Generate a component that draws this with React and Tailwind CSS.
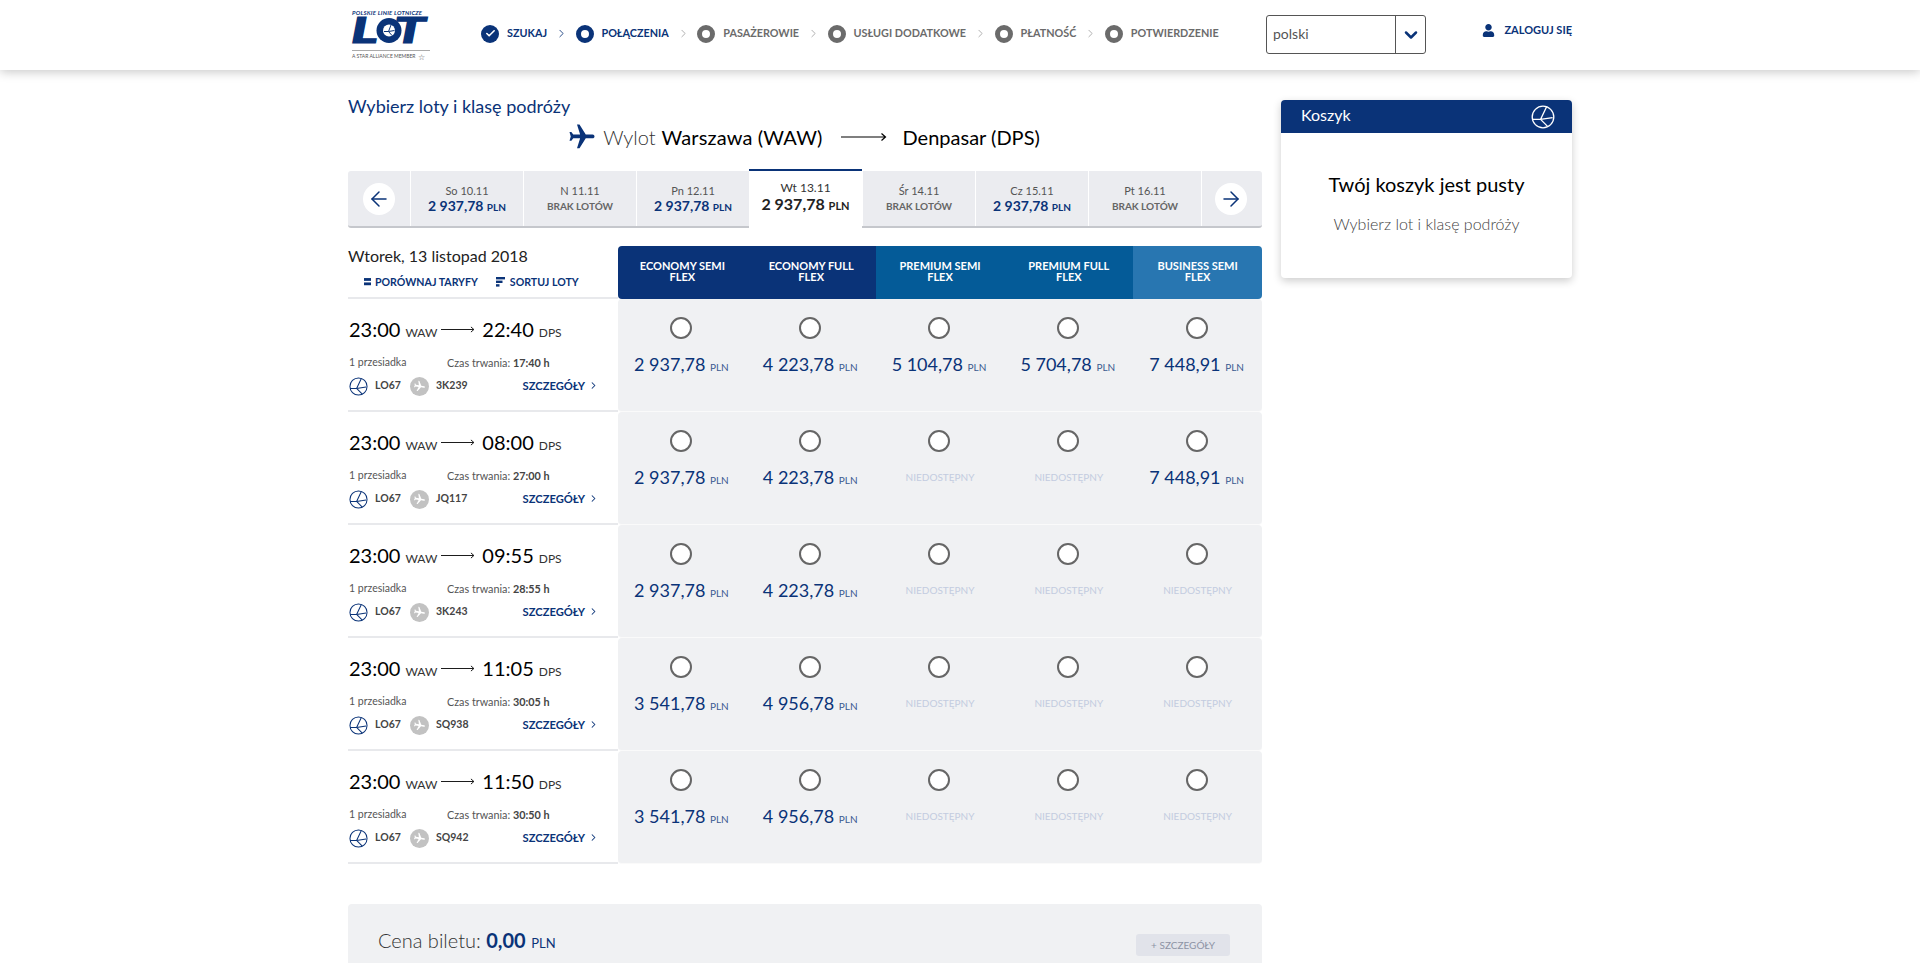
import { ArrowLeft, ArrowRight, Check, ChevronDown, ChevronRight } from "lucide-react";
import { FaUser } from "react-icons/fa";
import { MdFlight } from "react-icons/md";

const steps = [
  { label: "SZUKAJ", state: "done" },
  { label: "POŁĄCZENIA", state: "active" },
  { label: "PASAŻEROWIE", state: "todo" },
  { label: "USŁUGI DODATKOWE", state: "todo" },
  { label: "PŁATNOŚĆ", state: "todo" },
  { label: "POTWIERDZENIE", state: "todo" },
];

const days = [
  { day: "So 10.11", price: "2 937,78" },
  { day: "N 11.11" },
  { day: "Pn 12.11", price: "2 937,78" },
  { day: "Wt 13.11", price: "2 937,78", active: true },
  { day: "Śr 14.11" },
  { day: "Cz 15.11", price: "2 937,78" },
  { day: "Pt 16.11" },
];

const fares = [
  { name: "ECONOMY SEMI FLEX", bg: "bg-[#0a3378]", round: "rounded-l-[4px]" },
  { name: "ECONOMY FULL FLEX", bg: "bg-[#0a3378]" },
  { name: "PREMIUM SEMI FLEX", bg: "bg-[#045b98]" },
  { name: "PREMIUM FULL FLEX", bg: "bg-[#045b98]" },
  { name: "BUSINESS SEMI FLEX", bg: "bg-[#2876b1]", round: "rounded-r-[4px]" },
];

const flights = [
  { arr: "22:40", time: "17:40", code: "3K239", prices: ["2 937,78", "4 223,78", "5 104,78", "5 704,78", "7 448,91"] },
  { arr: "08:00", time: "27:00", code: "JQ117", prices: ["2 937,78", "4 223,78", null, null, "7 448,91"] },
  { arr: "09:55", time: "28:55", code: "3K243", prices: ["2 937,78", "4 223,78", null, null, null] },
  { arr: "11:05", time: "30:05", code: "SQ938", prices: ["3 541,78", "4 956,78", null, null, null] },
  { arr: "11:50", time: "30:50", code: "SQ942", prices: ["3 541,78", "4 956,78", null, null, null] },
];

function Crane({ className, color = "#0a3378" }) {
  return (
    <svg viewBox="0 0 20 20" className={className} fill="none" stroke={color} strokeWidth="1.1">
      <circle cx="10" cy="10" r="9" />
      <path d="M13 1.5 L8 12 L1.2 12 M8 12 L18 10.5 M8 12 L14 18" />
    </svg>
  );
}

function LongArrow({ className }) {
  return (
    <svg viewBox="0 0 46 10" className={className} fill="none" stroke="currentColor" strokeWidth="1.2">
      <path d="M0 5 H44 M40.5 1.5 L44.5 5 L40.5 8.5" />
    </svg>
  );
}

function Logo() {
  return (
    <div className="w-[82px] h-[52px] shrink-0 mt-[9px] ml-[4px]">
      <div className="text-[6px] leading-[7px] italic font-bold tracking-[0.2px] text-[#0a3378] whitespace-nowrap">POLSKIE LINIE LOTNICZE</div>
      <svg viewBox="0 0 80 27" className="w-[80px] h-[27px] mt-[1px] block overflow-visible">
        <text
          transform="translate(-1 26) scale(1.55 1)"
          fontFamily="Lato, sans-serif"
          fontWeight="900"
          fontStyle="italic"
          fontSize="36"
          fill="#0a3378"
          stroke="#0a3378"
          strokeWidth="1"
        >
          L
        </text>
        <circle cx="37" cy="13.5" r="12.5" fill="#0a3378" />
        <circle cx="37" cy="13.5" r="6" fill="#fff" />
        <path d="M39 8 L36.5 14.5 L32 14.5 M36.5 14.5 L42.5 13.5 M36.5 14.5 L40 18.5" stroke="#0a3378" strokeWidth="1" fill="none" />
        <text
          transform="translate(42 26) scale(1.55 1)"
          fontFamily="Lato, sans-serif"
          fontWeight="900"
          fontStyle="italic"
          fontSize="36"
          fill="#0a3378"
          stroke="#0a3378"
          strokeWidth="1"
        >
          T
        </text>
      </svg>
      <div className="h-px w-[78px] bg-[#aaa] mt-[6px]"></div>
      <div className="flex items-center gap-[2px] text-[5px] leading-[11px] text-[#555] whitespace-nowrap">
        A STAR ALLIANCE MEMBER <span className="text-[8px] leading-none">☆</span>
      </div>
    </div>
  );
}

function StepIcon({ state }) {
  if (state === "done") {
    return (
      <span className="w-[18px] h-[18px] rounded-full bg-[#0a3378] flex items-center justify-center">
        <Check size={11} strokeWidth={3.5} color="#fff" />
      </span>
    );
  }
  return <span className={`w-[18px] h-[18px] rounded-full bg-white border-[5px] ${state === "active" ? "border-[#0a3378]" : "border-[#6b6b6b]"}`}></span>;
}

function Header() {
  return (
    <header className="h-[70px] bg-white shadow-[0_2px_10px_rgba(0,0,0,0.22)] relative">
      <div className="w-[1224px] mx-auto flex">
        <Logo />
        <div className="flex items-center h-[67px] ml-[47px] w-[740px] shrink-0">
          {steps.map((s, i) => (
            <div key={s.label} className="flex items-center">
              {i > 0 && (
                <ChevronRight
                  size={13}
                  strokeWidth={1.6}
                  className={`ml-[8px] mr-[7.5px] ${i === 1 ? "text-[#0a3378]" : "text-[#a5a5a5]"}`}
                />
              )}
              <StepIcon state={s.state} />
              <span className={`ml-[8px] text-[10.8px] font-bold whitespace-nowrap ${s.state === "todo" ? "text-[#6b6b6b]" : "text-[#0a3378]"}`}>
                {s.label}
              </span>
            </div>
          ))}
        </div>
        <div className="flex h-[39px] w-[160px] mt-[15px] ml-[45px] border border-[#555] rounded-[3px] shrink-0">
          <div className="flex-1 pl-[6px] text-[14px] leading-[36px] text-[#555]">polski</div>
          <div className="w-[30px] border-l border-[#555] flex items-center justify-center">
            <ChevronDown size={20} strokeWidth={3} color="#0a3378" />
          </div>
        </div>
        <div className="flex items-center gap-[9px] ml-auto h-[60px] text-[11px] font-bold text-[#0a3378] whitespace-nowrap">
          <FaUser size={13} />
          ZALOGUJ SIĘ
        </div>
      </div>
    </header>
  );
}

function DayCell({ d }) {
  if (d.active) {
    return (
      <div className="w-[113px] h-[59px] -mt-[2px] bg-white border-t-[2px] border-[#0a3378] flex flex-col items-center pt-[10px] shrink-0">
        <div className="text-[12px] leading-[14px] text-[#333]">{d.day}</div>
        <div className="text-[16px] leading-[15px] mt-[1px] font-bold text-[#222]">
          {d.price} <span className="text-[11px]">PLN</span>
        </div>
      </div>
    );
  }
  return (
    <div className="w-[113px] border-l border-white flex flex-col items-center pt-[13px] shrink-0">
      <div className="text-[11px] leading-[14px] text-[#555]">{d.day}</div>
      {d.price ? (
        <div className="text-[14px] leading-[15px] font-bold text-[#0a3378]">
          {d.price} <span className="text-[10px]">PLN</span>
        </div>
      ) : (
        <div className="text-[10px] leading-[16px] font-bold text-[#666]">BRAK LOTÓW</div>
      )}
    </div>
  );
}

function DateStrip() {
  return (
    <div className="flex h-[57px] bg-[#ebecf0] border-b-[2px] border-[#c5c7cc] rounded-[3px] mt-[19px]">
      <div className="w-[62px] flex items-center justify-center shrink-0">
        <span className="w-[32px] h-[32px] rounded-full bg-white flex items-center justify-center">
          <ArrowLeft size={24} strokeWidth={1.5} color="#0a3378" />
        </span>
      </div>
      {days.map((d) => (
        <DayCell key={d.day} d={d} />
      ))}
      <div className="flex-1 border-l border-white flex items-center justify-center pr-[2px]">
        <span className="w-[32px] h-[32px] rounded-full bg-white flex items-center justify-center">
          <ArrowRight size={24} strokeWidth={1.5} color="#0a3378" />
        </span>
      </div>
    </div>
  );
}

function FlightRow({ f }) {
  return (
    <div className="flex h-[113px]">
      <div className="w-[270px] shrink-0 border-b-[2px] border-[#e8e9ec] pt-[16px]">
        <div className="flex items-baseline h-[28px] pl-px text-black">
          <span className="text-[20px] leading-[28px]">23:00</span>
          <span className="text-[12px] ml-[5px] text-[#333]">WAW</span>
          <LongArrow className="w-[34px] h-[9px] ml-[4px] mr-[7px] self-center" />
          <span className="text-[20px] leading-[28px]">{f.arr}</span>
          <span className="text-[12px] ml-[5px] text-[#333]">DPS</span>
        </div>
        <div className="flex items-center h-[14px] mt-[13px] pl-px text-[10.5px] text-[#555]">
          <span className="w-[98px]">1 przesiadka</span>
          <span className="text-[10.8px]">
            Czas trwania: <b className="text-[#444]">{f.time} h</b>
          </span>
        </div>
        <div className="flex items-center h-[20px] mt-[6px] pl-px text-[10.5px] font-bold text-[#444]">
          <Crane className="w-[19px] h-[19px]" />
          <span className="ml-[7px] w-[31px]">LO67</span>
          <span className="w-[19px] h-[19px] rounded-full bg-[#c2c2c2] flex items-center justify-center ml-[4px]">
            <MdFlight size={13} color="#fff" className="rotate-[100deg]" />
          </span>
          <span className="ml-[7px]">{f.code}</span>
          <span className="ml-auto mr-[19px] flex items-center gap-[3px] text-[11.2px] text-[#0a3378]">
            SZCZEGÓŁY <ChevronRight size={11} strokeWidth={2.2} />
          </span>
        </div>
      </div>
      <div className="flex-1 grid grid-cols-5 bg-[#f0f1f3] rounded-[4px] border-b border-[#fafafa]">
        {f.prices.map((p, i) => (
          <div key={i} className="flex flex-col items-center pt-[18px]">
            <span className="w-[22px] h-[22px] -ml-[2px] rounded-full bg-white border-2 border-[#666]"></span>
            {p ? (
              <div className="mt-[13px] -ml-[2px] text-[18px] leading-[24px] text-[#0a3378] whitespace-nowrap">
                {p} <span className="text-[10px] text-[#3a5a90]">PLN</span>
              </div>
            ) : (
              <div className="mt-[18px] text-[10px] leading-[14px] text-[#c3cce0] whitespace-nowrap">NIEDOSTĘPNY</div>
            )}
          </div>
        ))}
      </div>
    </div>
  );
}

function Cart() {
  return (
    <aside className="w-[291px] h-[178px] mt-[30px] rounded-[4px] bg-white shadow-[0_3px_8px_rgba(0,0,0,0.2)] shrink-0">
      <div className="h-[33px] bg-[#0a3378] rounded-t-[4px] flex items-center justify-between pl-[20px] pr-[17px] text-white text-[16px]">
        <span className="-mt-[4px]">Koszyk</span>
        <Crane className="w-[24px] h-[24px]" color="#fff" />
      </div>
      <div className="text-center pt-[38px]">
        <div className="text-[20px] leading-[26px] text-black">Twój koszyk jest pusty</div>
        <div className="text-[16px] leading-[20px] font-light text-[#444] mt-[17px]">Wybierz lot i klasę podróży</div>
      </div>
    </aside>
  );
}

export default function App() {
  return (
    <div className="h-screen overflow-hidden bg-white font-['Lato',sans-serif]">
      <Header />
      <main className="w-[1224px] mx-auto flex gap-[19px]">
        <section className="w-[914px] shrink-0">
          <h2 className="text-[18px] leading-[24px] text-[#0a3378] mt-[24px]">Wybierz loty i klasę podróży</h2>
          <div className="flex items-center justify-center h-[30px] mt-[4px] pr-[3px] text-[20px] text-black">
            <MdFlight size={30} color="#0a3378" className="rotate-90 mr-[6px]" />
            <span className="font-light text-[#333] mr-[6px]">Wylot</span>
            <span className="tracking-[0.15px]">Warszawa (WAW)</span>
            <LongArrow className="w-[46px] h-[10px] ml-[18px] mr-[16px]" />
            <span>Denpasar (DPS)</span>
          </div>
          <DateStrip />
          <div className="flex h-[53px] mt-[18px]">
            <div className="w-[270px] shrink-0 border-b-[2px] border-[#e8e9ec]">
              <div className="text-[16px] leading-[20px] text-[#222]">Wtorek, 13 listopad 2018</div>
              <div className="flex items-center mt-[9px] pl-[16px] text-[10.6px] leading-[14px] font-bold text-[#0a3378]">
                <svg viewBox="0 0 8 9" className="w-[7px] h-[8px] mr-[4px]" fill="#0a3378">
                  <rect x="0" y="0" width="8" height="3.2" />
                  <rect x="0" y="5" width="8" height="3.2" />
                </svg>
                PORÓWNAJ TARYFY
                <svg viewBox="0 0 9 10" className="w-[9px] h-[10px] ml-[18px] mr-[5px]" fill="#0a3378">
                  <rect x="0" y="0" width="9" height="2.4" />
                  <rect x="0" y="3.6" width="6.5" height="2.4" />
                  <rect x="0" y="7.2" width="3.5" height="2.4" />
                </svg>
                SORTUJ LOTY
              </div>
            </div>
            <div className="flex-1 grid grid-cols-5">
              {fares.map((c) => (
                <div
                  key={c.name}
                  className={`${c.bg} ${c.round || ""} flex items-center justify-center text-center text-white text-[11px] leading-[11px] font-bold px-[16px] pb-[3px]`}
                >
                  {c.name}
                </div>
              ))}
            </div>
          </div>
          {flights.map((f) => (
            <FlightRow key={f.code} f={f} />
          ))}
          <div className="h-[100px] mt-[40px] bg-[#f0f1f3] rounded-[4px] flex items-start justify-between pl-[30px] pr-[32px] pt-[23px]">
            <div className="text-[20px] leading-[26px] font-light text-[#333]">
              Cena biletu: <b className="text-[#0a3378] font-bold">0,00</b>{" "}
              <b className="text-[13px] text-[#0a3378]">PLN</b>
            </div>
            <div className="w-[94px] h-[22px] mt-[7px] rounded-[3px] bg-[#e1e3ea] text-[10px] leading-[22px] text-center text-[#8d93a5]">
              + SZCZEGÓŁY
            </div>
          </div>
        </section>
        <Cart />
      </main>
    </div>
  );
}
